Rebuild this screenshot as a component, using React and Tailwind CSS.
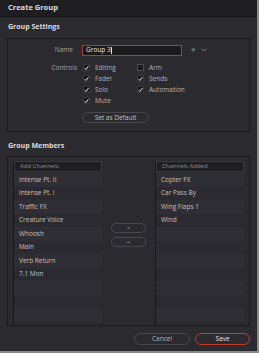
import React from "react";

function Check({ on }) {
  return (
    <div className={`w-[7px] h-[7px] flex items-center justify-center ${on ? "bg-[#151517] border border-[#3a3a3f]" : "bg-[#1a1a1d] border border-[#4a4a50]"}`}>
      {on && (
        <svg width="6" height="6" viewBox="0 0 6 6">
          <path d="M0.8 3.3 L2.3 4.8 L5.3 0.8" stroke="#f2f2f2" strokeWidth="1.2" fill="none" />
        </svg>
      )}
    </div>
  );
}

function Ctl({ on, label }) {
  return (
    <div className="flex items-center h-[11px]">
      <Check on={on} />
      <span className="ml-[5px] text-[#b4b4b8]">{label}</span>
    </div>
  );
}

const left = ["Intense Pt. II", "Intense Pt. I", "Traffic FX", "Creature Voice", "Whoosh", "Main", "Verb Return", "7.1 Mon", "", "", ""];
const right = ["Copter FX", "Car Pass By", "Wing Flaps 1", "Wind", "", "", "", "", "", "", ""];

function List({ title, items, w }) {
  return (
    <div className={`flex flex-col border-l border-[#18181b] ${w}`}>
      <div className="h-[11px] flex items-center px-[5px] bg-[#1f1f23] border border-[#3a3a40] text-[#8e8e94] text-[6px]">{title}</div>
      <div className="flex flex-col mt-[1px]">
        {items.map((it, i) => (
          <div key={i} className={`h-[13.5px] flex items-center px-[5px] text-[#c2c2c6] ${i % 2 === 0 ? "bg-[#2e2e34]" : "bg-[#2a2a30]"}`}>{it}</div>
        ))}
      </div>
    </div>
  );
}

export default function App() {
  return (
    <div className="w-[259px] h-[353px] bg-[#2a2a2f] flex flex-col text-[6.5px] border-r-2 border-b-2 border-[#8a8a8e]" style={{ fontFamily: '"Open Sans", "Noto Sans", sans-serif' }}>
      <div className="h-[17px] shrink-0 bg-[#1e1e21] border-b border-[#151517] flex items-center px-[8px] text-[#dedee2] text-[7.5px] font-bold">Create Group</div>
      <div className="mt-[5px] px-[8px] h-[11px] flex items-center font-bold text-[#dcdce0] text-[7px]">Group Settings</div>
      <div className="mt-[5px] mx-[7px] h-[94px] border border-[#1a1a1d] flex flex-col">
        <div className="mt-[5px] flex items-center h-[12px]">
          <span className="w-[65px] text-right text-[#a4a4a8]">Name</span>
          <div className="ml-[9px] w-[100px] h-[11px] border border-[#b23a30] bg-[#1b1b1e] flex items-center px-[3px] text-[#e6e6e6]">Group 3<span className="w-[1px] h-[7px] bg-[#e6e6e6]"></span></div>
          <span className="ml-[9px] text-[#3fb24f] font-bold text-[8px] leading-none">+</span>
          <svg className="ml-[5px]" width="6" height="4" viewBox="0 0 6 4"><path d="M0.5 0.8 L3 3 L5.5 0.8" stroke="#7a7a80" strokeWidth="1" fill="none" /></svg>
        </div>
        <div className="mt-[6px] flex">
          <span className="w-[69px] text-right text-[#a4a4a8] h-[11px] flex items-center justify-end">Controls</span>
          <div className="ml-[6px] flex flex-col w-[54px]">
            <Ctl on label="Editing" />
            <Ctl on label="Fader" />
            <Ctl on label="Solo" />
            <Ctl on label="Mute" />
          </div>
          <div className="flex flex-col">
            <Ctl on={false} label="Arm" />
            <Ctl on label="Sends" />
            <Ctl on label="Automation" />
          </div>
        </div>
        <div className="mt-[6px] ml-[74px] w-[67px] h-[11px] rounded-full border border-[#47474d] flex items-center justify-center text-[#c4c4c8]">Set as Default</div>
      </div>
      <div className="mt-[9px] px-[8px] h-[11px] flex items-center font-bold text-[#dcdce0] text-[7px]">Group Members</div>
      <div className="mt-[4px] mx-[7px] h-[170px] border border-[#1a1a1d] flex px-[5px] pt-[4px]">
        <List title="Add Channels" items={left} w="w-[89px]" />
        <div className="flex-1 flex flex-col items-center pt-[62px] gap-[4px]">
          <div className="w-[35px] h-[10px] rounded-full border border-[#47474d] flex items-center justify-center text-[#c4c4c8] text-[6px]">&gt;</div>
          <div className="w-[35px] h-[10px] rounded-full border border-[#47474d] flex items-center justify-center text-[#c4c4c8] text-[6px]">&lt;</div>
        </div>
        <List title="Channels Added" items={right} w="w-[89px]" />
      </div>
      <div className="mt-[7px] flex justify-end pr-[7px] gap-[5px]">
        <div className="w-[56px] h-[12px] rounded-full border border-[#47474d] flex items-center justify-center text-[#b8b8bc]">Cancel</div>
        <div className="w-[55px] h-[12px] rounded-full border border-[#c23a30] flex items-center justify-center text-[#e6e6ea]">Save</div>
      </div>
    </div>
  );
}
